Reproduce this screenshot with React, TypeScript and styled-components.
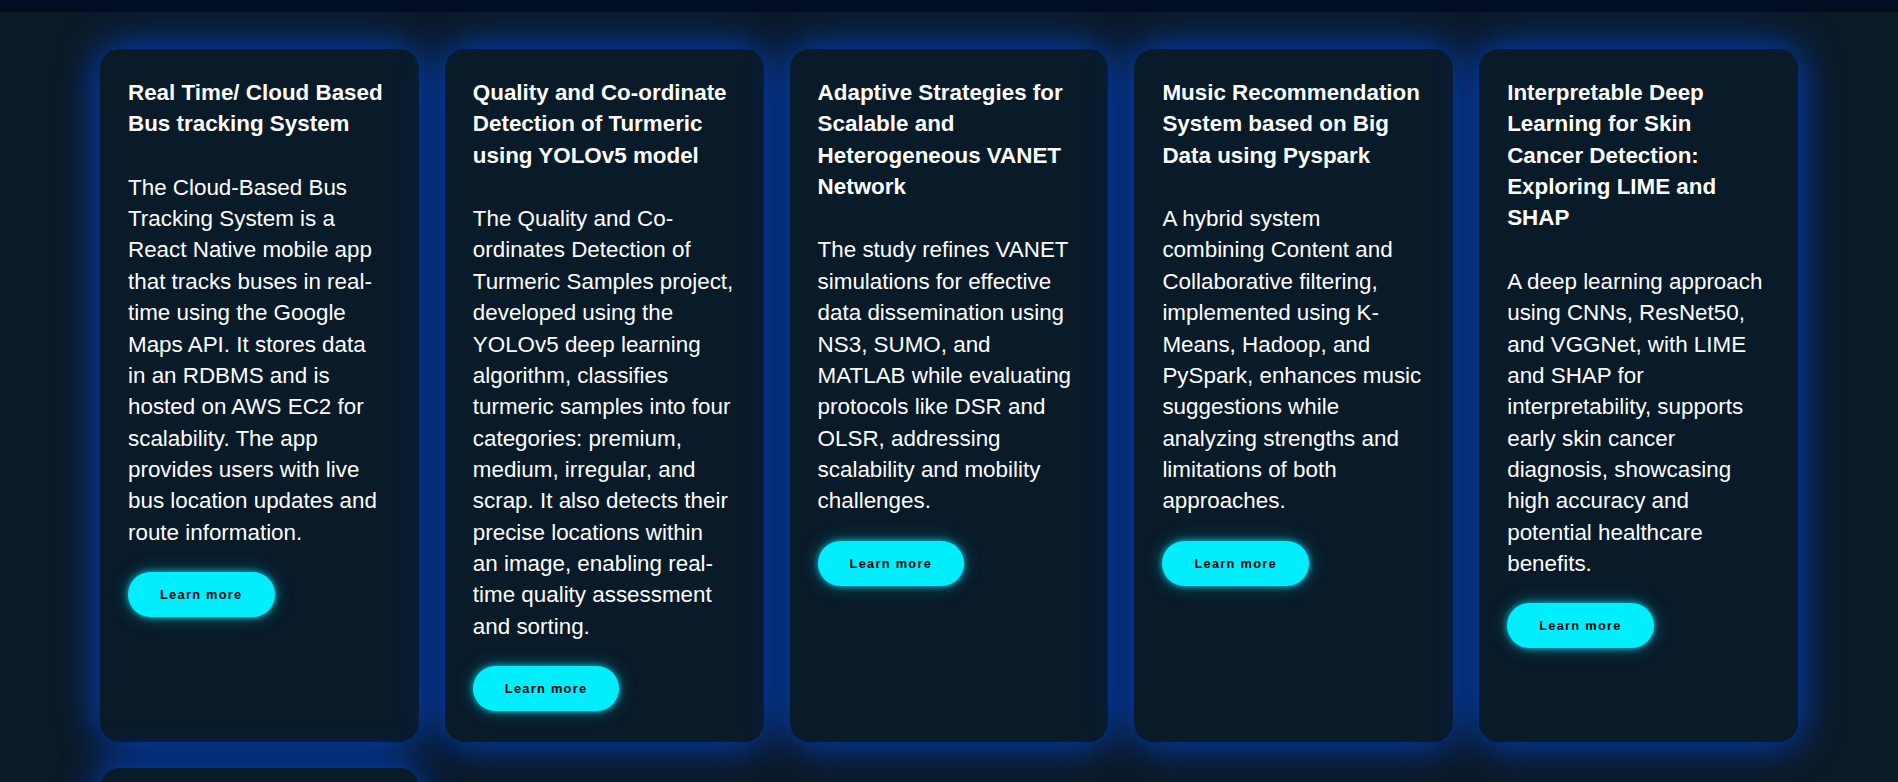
import React from "react";
import styled, { createGlobalStyle } from "styled-components";

const GlobalStyle = createGlobalStyle`
  html, body {
    margin: 0;
    padding: 0;
    background: #0b1a27;
  }
  body {
    font-family: "Liberation Sans", Arial, sans-serif;
  }
  * { box-sizing: border-box; }
`;

const TopBar = styled.div`
  height: 12px;
  background: #040f26;
`;

const Section = styled.section`
  background: #0b1a27;
  padding: 37px 100px 60px;
`;

const Grid = styled.div`
  display: grid;
  grid-template-columns: repeat(5, 1fr);
  gap: 26px;
`;

const Card = styled.article`
  display: flex;
  flex-direction: column;
  align-items: flex-start;
  padding: 28px 30px 31px 28px;
  border-radius: 20px;
  background: #091a29;
  box-shadow: 0 0 40px rgb(0, 71, 216);
`;

const Title = styled.h3`
  margin: 0 0 32px;
  font-size: 22.4px;
  line-height: 1.4;
  font-weight: 700;
  color: #ffffff;
`;

const Description = styled.p`
  margin: 0 0 24px;
  font-size: 22.4px;
  line-height: 1.4;
  font-weight: 400;
  color: #ffffff;
`;

const LearnMore = styled.button`
  height: 45px;
  padding: 0 32px;
  border: none;
  border-radius: 999px;
  background: #00eeff;
  color: #000000;
  font-family: "Liberation Sans", Arial, sans-serif;
  font-size: 12.8px;
  font-weight: 700;
  letter-spacing: 0.1em;
  cursor: pointer;
  box-shadow: 0 0 6px rgba(0, 238, 255, 0.8), 0 0 18px rgba(0, 238, 255, 0.35);
`;

const projects = [
  {
    title: "Real Time/ Cloud Based Bus tracking System",
    text: "The Cloud-Based Bus Tracking System is a React Native mobile app that tracks buses in real-time using the Google Maps API. It stores data in an RDBMS and is hosted on AWS EC2 for scalability. The app provides users with live bus location updates and route information.",
  },
  {
    title: "Quality and Co-ordinate Detection of Turmeric using YOLOv5 model",
    text: "The Quality and Co-ordinates Detection of Turmeric Samples project, developed using the YOLOv5 deep learning algorithm, classifies turmeric samples into four categories: premium, medium, irregular, and scrap. It also detects their precise locations within an image, enabling real-time quality assessment and sorting.",
  },
  {
    title: "Adaptive Strategies for Scalable and Heterogeneous VANET Network",
    text: "The study refines VANET simulations for effective data dissemination using NS3, SUMO, and MATLAB while evaluating protocols like DSR and OLSR, addressing scalability and mobility challenges.",
  },
  {
    title: "Music Recommendation System based on Big Data using Pyspark",
    text: "A hybrid system combining Content and Collaborative filtering, implemented using K-Means, Hadoop, and PySpark, enhances music suggestions while analyzing strengths and limitations of both approaches.",
  },
  {
    title: "Interpretable Deep Learning for Skin Cancer Detection: Exploring LIME and SHAP",
    text: "A deep learning approach using CNNs, ResNet50, and VGGNet, with LIME and SHAP for interpretability, supports early skin cancer diagnosis, showcasing high accuracy and potential healthcare benefits.",
  },
  {
    title: "Portfolio Website",
    text: "A personal portfolio website built with React to showcase projects, skills and experience.",
  },
];

export default function App() {
  return (
    <>
      <GlobalStyle />
      <TopBar />
      <Section>
        <Grid>
          {projects.map((p) => (
            <Card key={p.title}>
              <Title>{p.title}</Title>
              <Description>{p.text}</Description>
              <LearnMore>Learn more</LearnMore>
            </Card>
          ))}
        </Grid>
      </Section>
    </>
  );
}
